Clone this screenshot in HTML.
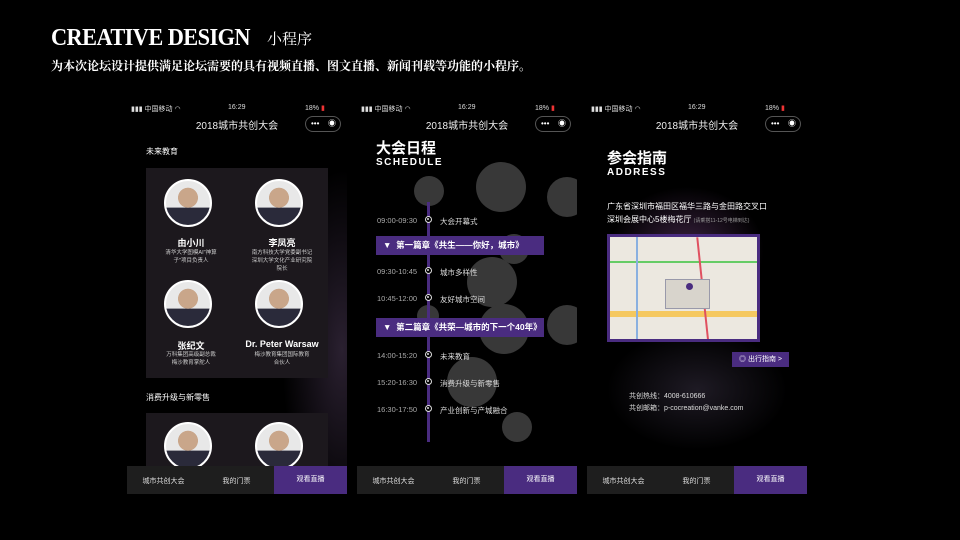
<!DOCTYPE html><html><head><meta charset="utf-8"><style>
*{margin:0;padding:0;box-sizing:border-box}
body{width:960px;height:540px;background:#000;overflow:hidden;position:relative;font-family:"Liberation Sans","Noto Sans CJK SC",sans-serif;color:#fff}
.abs{position:absolute}
.ph{position:absolute;top:100px;width:220px;height:394px;background:#000;overflow:hidden}
.sb{position:absolute;top:4px;left:0;width:220px;font-size:7px;color:#ddd;height:10px}
.nav{position:absolute;top:17px;left:0;width:220px;text-align:center;font-size:10px;color:#eee}
.cap{position:absolute;top:16px;right:6px;width:36px;height:16px;border:1px solid #555;border-radius:8px;font-size:8px;color:#fff}
.tab{position:absolute;left:0;bottom:0;width:220px;height:28px;background:#1e1e1e;font-size:7px;color:#ddd}
.tab span{position:absolute;top:10px;width:73px;text-align:center}
.tab .on{right:0;top:0;height:28px;line-height:28px;background:#4a2c80;color:#fff}
.card{position:absolute;left:19px;width:182px;background:#1c181d}
.av{position:absolute;width:48px;height:48px;border-radius:50%;border:2px solid #fff;background:radial-gradient(circle at 50% 38%,#c9a68a 0 28%,transparent 29%),linear-gradient(#e8e8e8 60%,#2a2a3a 61%)}
.nm{position:absolute;width:90px;text-align:center;font-size:9px;font-weight:bold}
.ds{position:absolute;width:90px;text-align:center;font-size:5.5px;color:#ccc;line-height:8px}
.c{position:absolute;border-radius:50%;background:#383838}
.row{position:absolute;left:20px;font-size:7.5px;color:#ddd}
.row b{font-weight:normal;color:#aaa;display:inline-block;width:46px}
.dot{position:absolute;left:68px;width:7px;height:7px;border-radius:50%;border:1.5px solid #ddd;background:#000}
.dot:after{content:"";position:absolute;left:1.2px;top:1.2px;width:2px;height:2px;border-radius:50%;background:#ddd}
.chap{position:absolute;left:19px;width:168px;height:19px;background:#4a2c80;font-size:8.5px;font-weight:bold;line-height:19px;padding-left:7px}
</style></head><body>
<div class="abs" style="left:51px;top:25px;font-family:'Liberation Serif',serif;font-size:24px;font-weight:bold;letter-spacing:-0.6px;transform:scaleX(.93);transform-origin:left">CREATIVE DESIGN</div>
<div class="abs" style="left:267px;top:28px;font-size:15px;font-family:'Noto Serif CJK SC',serif">小程序</div>
<div class="abs" style="left:51px;top:57px;font-size:12px;font-weight:bold;font-family:'Noto Serif CJK SC',serif">为本次论坛设计提供满足论坛需要的具有视频直播、图文直播、新闻刊载等功能的小程序。</div>

<!-- phone 1 -->
<div class="ph" style="left:127px;background:radial-gradient(ellipse 60px 180px at 215px 250px,#2a2030,transparent),#000">
<div class="sb"><span style="position:absolute;left:4px">▮▮▮ 中国移动 ◠</span><span style="position:absolute;left:101px">16:29</span><span style="position:absolute;left:178px">18% <span style="color:#e33">▮</span></span></div>
<div class="nav">2018城市共创大会</div><div class="cap"><span class="abs" style="left:5px;top:2px">•••</span><span class="abs" style="left:22px;top:1px">◉</span></div>
<div class="abs" style="left:19px;top:46px;font-size:8px">未来教育</div>
<div class="card" style="top:68px;height:210px">
<div class="av" style="left:18px;top:11px"></div><div class="av" style="left:109px;top:11px"></div>
<div class="nm" style="left:0;top:68px">由小川</div><div class="nm" style="left:91px;top:68px">李凤亮</div>
<div class="ds" style="left:0;top:81px">清华大学图模AI"神算<br>子"项目负责人</div><div class="ds" style="left:91px;top:81px">南方科技大学党委副书记<br>深圳大学文化产业研究院<br>院长</div>
<div class="av" style="left:18px;top:112px"></div><div class="av" style="left:109px;top:112px"></div>
<div class="nm" style="left:0;top:171px">张纪文</div><div class="nm" style="left:91px;top:171px">Dr. Peter Warsaw</div>
<div class="ds" style="left:0;top:183px">万科集团高级副总裁<br>梅沙教育掌舵人</div><div class="ds" style="left:91px;top:183px">梅沙教育集团国际教育<br>合伙人</div>
</div>
<div class="abs" style="left:19px;top:292px;font-size:8px">消费升级与新零售</div>
<div class="card" style="top:313px;height:60px"><div class="av" style="left:18px;top:9px"></div><div class="av" style="left:109px;top:9px"></div></div>
<div class="tab"><span style="left:0">城市共创大会</span><span style="left:73px">我的门票</span><span class="on">观看直播</span></div>
</div>

<!-- phone 2 -->
<div class="ph" style="left:357px">
<div class="c" style="left:119px;top:62px;width:50px;height:50px"></div>
<div class="c" style="left:57px;top:76px;width:30px;height:30px"></div>
<div class="c" style="left:190px;top:77px;width:40px;height:40px"></div>
<div class="c" style="left:142px;top:134px;width:30px;height:30px"></div>
<div class="c" style="left:110px;top:157px;width:50px;height:50px"></div>
<div class="c" style="left:60px;top:205px;width:22px;height:22px"></div>
<div class="c" style="left:122px;top:204px;width:50px;height:50px"></div>
<div class="c" style="left:190px;top:205px;width:40px;height:40px"></div>
<div class="c" style="left:90px;top:257px;width:50px;height:50px"></div>
<div class="c" style="left:145px;top:312px;width:30px;height:30px"></div>
<div class="sb"><span style="position:absolute;left:4px">▮▮▮ 中国移动 ◠</span><span style="position:absolute;left:101px">16:29</span><span style="position:absolute;left:178px">18% <span style="color:#e33">▮</span></span></div>
<div class="nav">2018城市共创大会</div><div class="cap"><span class="abs" style="left:5px;top:2px">•••</span><span class="abs" style="left:22px;top:1px">◉</span></div>
<div class="abs" style="left:19px;top:37px;font-size:15px;font-weight:bold">大会日程</div>
<div class="abs" style="left:19px;top:57px;font-size:10px;font-weight:bold;letter-spacing:1.5px">SCHEDULE</div>
<div class="abs" style="left:70px;top:102px;width:3px;height:240px;background:#4a2c80"></div>
<div class="row" style="top:116px"><b>09:00-09:30</b></div><div class="dot" style="top:116px"></div><div class="row" style="left:83px;top:116px">大会开幕式</div>
<div class="chap" style="top:136px">▼&nbsp; 第一篇章《共生——你好，城市》</div>
<div class="row" style="top:167px"><b>09:30-10:45</b></div><div class="dot" style="top:167px"></div><div class="row" style="left:83px;top:167px">城市多样性</div>
<div class="row" style="top:194px"><b>10:45-12:00</b></div><div class="dot" style="top:194px"></div><div class="row" style="left:83px;top:194px">友好城市空间</div>
<div class="chap" style="top:218px">▼&nbsp; 第二篇章《共荣—城市的下一个40年》</div>
<div class="row" style="top:251px"><b>14:00-15:20</b></div><div class="dot" style="top:251px"></div><div class="row" style="left:83px;top:251px">未来教育</div>
<div class="row" style="top:278px"><b>15:20-16:30</b></div><div class="dot" style="top:278px"></div><div class="row" style="left:83px;top:278px">消费升级与新零售</div>
<div class="row" style="top:305px"><b>16:30-17:50</b></div><div class="dot" style="top:305px"></div><div class="row" style="left:83px;top:305px">产业创新与产城融合</div>
<div class="tab"><span style="left:0">城市共创大会</span><span style="left:73px">我的门票</span><span class="on">观看直播</span></div>
</div>

<!-- phone 3 -->
<div class="ph" style="left:587px;background:radial-gradient(ellipse 110px 90px at 100px 150px,#3a2240,transparent 70%),radial-gradient(ellipse 90px 60px at 110px 290px,#1e1a24,transparent),#000">
<div class="sb"><span style="position:absolute;left:4px">▮▮▮ 中国移动 ◠</span><span style="position:absolute;left:101px">16:29</span><span style="position:absolute;left:178px">18% <span style="color:#e33">▮</span></span></div>
<div class="nav">2018城市共创大会</div><div class="cap"><span class="abs" style="left:5px;top:2px">•••</span><span class="abs" style="left:22px;top:1px">◉</span></div>
<div class="abs" style="left:20px;top:47px;font-size:15px;font-weight:bold">参会指南</div>
<div class="abs" style="left:20px;top:67px;font-size:10px;font-weight:bold;letter-spacing:1.5px">ADDRESS</div>
<div class="abs" style="left:20px;top:100px;font-size:8px;line-height:13px">广东省深圳市福田区福华三路与金田路交叉口<br>深圳会展中心5楼梅花厅 <span style="font-size:5px;color:#999">(请乘搭11-12号电梯到达)</span></div>
<div class="abs" style="left:20px;top:134px;width:153px;height:108px;border:3px solid #4a2c80;background:#ece8e0;overflow:hidden">
<div class="abs" style="left:0;top:24px;width:150px;height:2px;background:#6c6"></div>
<div class="abs" style="left:0;top:74px;width:150px;height:6px;background:#f5c860"></div>
<div class="abs" style="left:26px;top:0;width:2px;height:110px;background:#8ab0e0"></div>
<div class="abs" style="left:92px;top:0;width:2px;height:110px;background:#e05060;transform:rotate(-6deg)"></div>
<div class="abs" style="left:55px;top:42px;width:45px;height:30px;background:#d8d4cc;border:1px solid #99a"></div>
<div class="abs" style="left:76px;top:46px;width:7px;height:7px;border-radius:50%;background:#4a2c80"></div>
</div>
<div class="abs" style="left:145px;top:252px;width:57px;height:15px;background:#4a2c80;font-size:7px;line-height:15px;text-align:center">◎ 出行指南 &gt;</div>
<div class="abs" style="left:42px;top:291px;font-size:7px;line-height:12px;color:#ddd">共创热线：4008-610666<br>共创邮箱：p-cocreation@vanke.com</div>
<div class="tab"><span style="left:0">城市共创大会</span><span style="left:73px">我的门票</span><span class="on">观看直播</span></div>
</div>
</body></html>
